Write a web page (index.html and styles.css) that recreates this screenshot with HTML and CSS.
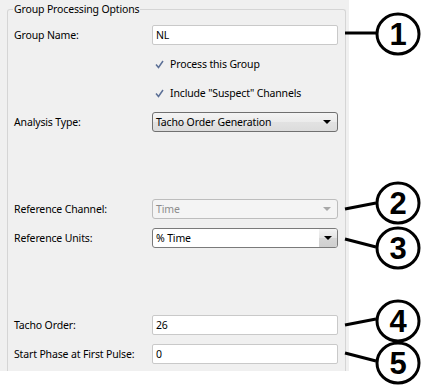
FILE: index.html
```html
<!DOCTYPE html>
<html lang="en">
<head>
    <meta charset="UTF-8">
    <title>Group Processing Options</title>
    <link rel="stylesheet" href="styles.css">
</head>
<body>
    <div class="panel">
        <fieldset class="group">
            <legend>Group Processing Options</legend>
            <div class="form-grid">
                <label class="label">Group Name:</label>
                <div class="textbox">NL</div>

                <div class="check-row">
                    <svg class="check" width="9" height="9" viewBox="0 0 9 9"><path d="M1 4.5 L3.5 7.5 L8 1" fill="none" stroke="#5b6f96" stroke-width="1.5"/></svg>
                    <span>Process this Group</span>
                </div>

                <div class="check-row">
                    <svg class="check" width="9" height="9" viewBox="0 0 9 9"><path d="M1 4.5 L3.5 7.5 L8 1" fill="none" stroke="#5b6f96" stroke-width="1.5"/></svg>
                    <span>Include "Suspect" Channels</span>
                </div>

                <label class="label">Analysis Type:</label>
                <div class="combo combo-button">
                    <span>Tacho Order Generation</span>
                    <span class="arrow"></span>
                </div>

                <div class="spacer"></div>
                <div class="spacer"></div>

                <label class="label">Reference Channel:</label>
                <div class="combo combo-disabled">
                    <span>Time</span>
                    <span class="arrow"></span>
                </div>

                <label class="label">Reference Units:</label>
                <div class="combo combo-edit">
                    <span>% Time</span>
                    <span class="drop"><span class="arrow"></span></span>
                </div>

                <div class="spacer"></div>
                <div class="spacer"></div>

                <label class="label">Tacho Order:</label>
                <div class="textbox">26</div>

                <label class="label">Start Phase at First Pulse:</label>
                <div class="textbox">0</div>
            </div>
        </fieldset>
    </div>

    <!-- callouts -->
    <svg class="callouts" width="425" height="386" viewBox="0 0 425 386">
        <g stroke="#000" stroke-width="3" fill="#fff">
            <line x1="345" y1="33" x2="376" y2="33"/>
            <line x1="345" y1="209" x2="376" y2="203"/>
            <line x1="345" y1="239" x2="376" y2="247"/>
            <line x1="345" y1="325" x2="376" y2="319"/>
            <line x1="345" y1="353" x2="376" y2="361"/>
            <ellipse cx="398" cy="34" rx="21" ry="20"/>
            <ellipse cx="398" cy="203" rx="21" ry="20"/>
            <ellipse cx="398" cy="248" rx="21" ry="20"/>
            <ellipse cx="398" cy="321" rx="21" ry="20"/>
            <ellipse cx="398" cy="363" rx="21" ry="20"/>
        </g>
        <g class="num" text-anchor="middle">
            <text x="398" y="45">1</text>
            <text x="398" y="214">2</text>
            <text x="398" y="259">3</text>
            <text x="398" y="332">4</text>
            <text x="398" y="374">5</text>
        </g>
    </svg>
</body>
</html>
```

FILE: styles.css
```css
* {
    margin: 0;
    padding: 0;
    box-sizing: border-box;
}

body {
    background: #fff;
    font-family: "Noto Sans", sans-serif;
    font-size: 10.5px;
    letter-spacing: -0.15px;
    color: #000;
    position: relative;
    width: 425px;
    height: 386px;
    overflow: hidden;
}

.panel {
    width: 349px;
    height: 371px;
    background: #f0f0f0;
    padding: 3px 0 0 7px;
    overflow: hidden;
}

/* Group box */
.group {
    width: 339px;
    height: 400px;
    border: 1px solid #d5d5d5;
    border-bottom: none;
    border-radius: 3px;
    padding: 0 0 0 6px;
}

.group legend {
    padding: 0 1px;
    margin-left: -1px;
    line-height: 13px;
}

.form-grid {
    display: grid;
    grid-template-columns: 138px 186px;
    grid-auto-rows: 20px;
    row-gap: 9px;
    margin-top: 9px;
}

.label {
    display: flex;
    align-items: center;
    padding-bottom: 1px;
}

.spacer {
    grid-column: 1 / span 2;
}

.check-row {
    grid-column: 2;
    display: flex;
    align-items: center;
    gap: 6px;
    padding-left: 3px;
}

.check {
    flex: none;
}

/* Inputs */
.textbox {
    grid-column: 2;
    background: #fff;
    border: 1px solid #c9c9c9;
    border-radius: 2px;
    padding: 0 3px;
    display: flex;
    align-items: center;
}

.combo {
    grid-column: 2;
    display: flex;
    align-items: center;
    justify-content: space-between;
    padding-left: 3px;
    border-radius: 3px;
}

.arrow {
    width: 0;
    height: 0;
    border-left: 4px solid transparent;
    border-right: 4px solid transparent;
    border-top: 4px solid #000;
}

.combo-button {
    border: 1px solid #707070;
    background: linear-gradient(#f4f4f4, #ebebeb 50%, #e2e2e2 51%, #dcdcdc);
    padding-right: 6px;
}

.combo-disabled {
    border: 1px solid #bdbdbd;
    background: #f4f4f4;
    color: #8d8d8d;
    padding-right: 6px;
}

.combo-disabled .arrow {
    border-top-color: #a8a8a8;
}

.combo-edit {
    border: 1px solid #7a7a7a;
    background: #fff;
    padding-right: 0;
}

.drop {
    width: 18px;
    height: 100%;
    display: flex;
    align-items: center;
    justify-content: center;
    background: linear-gradient(#f3f3f3, #e3e3e3 50%, #d6d6d6 51%, #cfcfcf);
    border-radius: 0 2px 2px 0;
}

/* Callouts */
.callouts {
    position: absolute;
    left: 0;
    top: 0;
}

.num text {
    font-family: "Liberation Sans", Arial, sans-serif;
    font-weight: bold;
    font-size: 31px;
    fill: #000;
}
```
